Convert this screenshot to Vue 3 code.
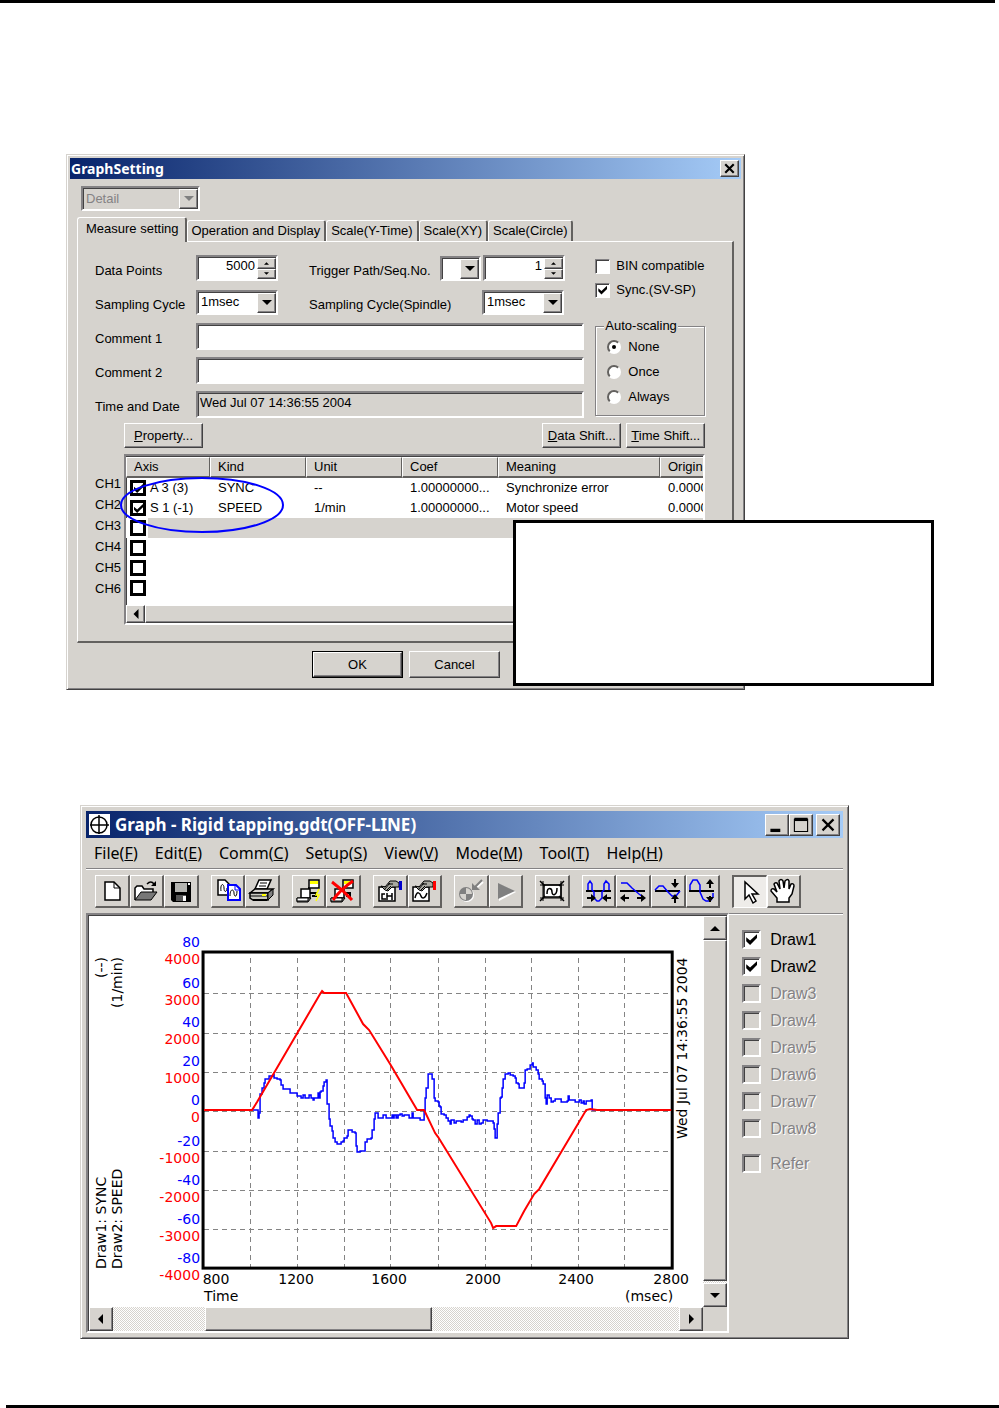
<script setup>
import { ref } from 'vue'

const tabs = ['Measure setting', 'Operation and Display', 'Scale(Y-Time)', 'Scale(XY)', 'Scale(Circle)']
const activeTab = ref(0)
const columns = ['Axis', 'Kind', 'Unit', 'Coef', 'Meaning', 'Origin']
const channels = ref([
  { on: true, cells: ['A 3 (3)', 'SYNC', '--', '1.00000000...', 'Synchronize error', '0.0000'] },
  { on: true, cells: ['S 1 (-1)', 'SPEED', '1/min', '1.00000000...', 'Motor speed', '0.0000'] },
  { on: false, selected: true, cells: ['', '', '', '', '', ''] },
  { on: false, cells: ['', '', '', '', '', ''] },
  { on: false, cells: ['', '', '', '', '', ''] },
  { on: false, cells: ['', '', '', '', '', ''] }
])
const dataPoints = ref(5000)
const seqNo = ref(1)
const bin = ref(false)
const sync = ref(true)
const scaling = ref('None')

const menus = [['File', 'F'], ['Edit', 'E'], ['Comm', 'C'], ['Setup', 'S'], ['View', 'V'], ['Mode', 'M'], ['Tool', 'T'], ['Help', 'H']]
const draws = ref([1, 2, 3, 4, 5, 6, 7, 8].map(n => ({ label: 'Draw' + n, on: n < 3, off: n > 2 })).concat({ label: 'Refer', on: false, off: true }))

// Toolbar icons on a 34 x 34 grid: d = path, f = fill, s = stroke, w = stroke width
const K = '#000'
const W = '#fff'
const B = '#00f'
const G = '#808080'
const laptops = [
  { d: 'M17 12v6h7v3h-4', s: K, w: 2 },
  { d: 'M9 14h9v9H9z', f: W, s: K, w: 1.5 },
  { d: 'M5 23h14l-3 4H5z', f: G, s: K },
  { d: 'M5 23h11v3H5z', f: W, s: K },
  { d: 'M17 5h10v8H17z', f: W, s: K, w: 1.5 },
  { d: 'M18 6h8v3h-8z', f: '#ff0' }
]
const handCard = c => [
  { d: 'M6 12h16v14H6z', f: W, s: K, w: 1.5 },
  { d: 'M12 15l-4-4 4 1 5-6h6l3 2v4h-7l-4 4z', f: '#a8a8a0', s: K },
  { d: 'M11 15l6-7M14 15l4-4M15 9h5', s: K },
  { d: 'M26 6h3v9h-3z', f: c }
]
const groups = [
  [
    { name: 'New', shapes: [{ d: 'M10 7h9l6 6v12H10z', f: W, s: K, w: 1.5 }, { d: 'M19 7v6h6', s: K }] },
    { name: 'Open', shapes: [{ d: 'M6 25V13l2-2h5l2 3h9v4', f: W, s: K, w: 1.5 }, { d: 'M6 25l6-8h16l-6 8z', f: '#777', s: K }, { d: 'M18 9q4-4 7 0', s: K, w: 1.5 }, { d: 'M27 6v5h-5z', f: K }] },
    { name: 'Save', shapes: [{ d: 'M7 7h20v20H9l-2-2z', f: K }, { d: 'M11 8h12v9H11z', f: '#b4b4b0' }, { d: 'M24 8h2v2h-2z', f: W }, { d: 'M12 20h10v6H12z', f: '#555' }, { d: 'M19 21h3v5h-3z', f: W }] }
  ],
  [
    { name: 'Copy', shapes: [{ d: 'M7 5h7l4 4v11H7z', f: W, s: K, w: 1.5 }, { d: 'M10 16c-1-8 3-8 3-3s3 4 3 0', s: K }, { d: 'M17 10h8l4 4v11H17z', f: W, s: B, w: 2 }, { d: 'M24 10v5h5', s: B }, { d: 'M19 21c0-8 4-7 4-3s3 5 3-2', s: K }] },
    { name: 'Print', shapes: [{ d: 'M10 14l4-9h12l-4 9z', f: W, s: K, w: 1.5 }, { d: 'M15 8h7M14 11h7', s: K }, { d: 'M5 18l5-4h18l-5 4z', f: '#d6d3ce', s: K, w: 1.5 }, { d: 'M5 18h18v7H8l-3-2z', f: '#c8c8c0', s: K, w: 1.5 }, { d: 'M23 18l5-4v6l-5 5z', f: G, s: K }, { d: 'M5 21h18', s: K }, { d: 'M17 19h4v2h-4z', f: '#ff0' }, { d: 'M8 25h14', s: K, w: 2 }] }
  ],
  [
    { name: 'Connect', shapes: [...laptops, { d: 'M27 14l-3 6h3l-3 6', s: '#ff0', w: 1.5 }] },
    { name: 'Disconnect', shapes: [...laptops, { d: 'M6 7q11 8 20 18M27 6q-12 8-20 19', s: '#f00', w: 3 }] }
  ],
  [
    { name: 'Channel setting', shapes: [...handCard('#00c'), { d: 'M12 19H9v5h4M14 18v7M14 21h5M19 18v7', s: K, w: 1.5 }] },
    { name: 'Wave setting', shapes: [...handCard('#f00'), { d: 'M8 23c2-8 5-5 6-2s4 3 6-3', s: K, w: 1.5 }] }
  ],
  [
    { name: 'Measure', shapes: [{ d: 'M6 20a7 7 0 1 0 14 0a7 7 0 1 0-14 0', f: W }, { d: 'M5 19a7 7 0 1 0 14 0a7 7 0 1 0-14 0', f: G }, { d: 'M12 13v6h6a6 6 0 0 0-6-6M12 19v6a6 6 0 0 1-6-6z', f: '#d6d3ce' }, { d: 'M29 7l-8 7', s: W, w: 2 }, { d: 'M28 5l-8 8', s: G, w: 2 }, { d: 'M18 8v7h8l-3-3-2-1z', f: G }] },
    { name: 'Start', shapes: [{ d: 'M10 9v17l17-9z', f: W }, { d: 'M9 8v16l17-8z', f: G }] }
  ],
  [
    { name: 'Fit area', shapes: [{ d: 'M9 10h17v12H9z', f: W, s: K, w: 1.5 }, { d: 'M5 10h24M5 23h24M8 6v20M26 6v20', s: K }, { d: 'M5 6l5 5M29 6l-5 5M5 26l5-5M29 26l-5-5', s: K, w: 1.5 }, { d: 'M12 19c0-8 5-6 5-2s5 4 5-4', s: K, w: 1.5 }] }
  ],
  [
    { name: 'Shrink time', shapes: [{ d: 'M4 16h25', s: K, w: 2 }, { d: 'M6 15V9l2-3 2 3v6l2 2v6l3 3h2l3-3v-6l2-2V9l2-3 3 3v6', s: B, w: 1.5 }, { d: 'M5 23h7M29 23h-7', s: K, w: 2 }, { d: 'M9 19v8l5-4zM25 19v8l-5-4z', f: K }] },
    { name: 'Expand time', shapes: [{ d: 'M4 16h25', s: K, w: 2 }, { d: 'M5 8h6l5 5 7 6 4 3', s: B, w: 1.5 }, { d: 'M7 23h6M21 23h6', s: K, w: 2 }, { d: 'M9 19v8l-5-4zM25 19v8l5-4z', f: K }] },
    { name: 'Shrink scale', shapes: [{ d: 'M4 16h25', s: K, w: 2 }, { d: 'M4 15l4-4h4l5 6 4 4h4l4-5', s: B, w: 1.5 }, { d: 'M24 4v6M24 28v-6', s: K, w: 2 }, { d: 'M20 8h8l-4 5zM20 24h8l-4-5z', f: K }] },
    { name: 'Expand scale', shapes: [{ d: 'M4 16h25', s: K, w: 2 }, { d: 'M5 15v-5l3-5h4l3 5v7l3 7 3 2h4l3-4v-4', s: B, w: 1.5 }, { d: 'M25 6v7M25 27v-6', s: K, w: 2 }, { d: 'M21 9h8l-4-5zM21 22h8l-4 5z', f: K }] }
  ],
  [
    { name: 'Pointer', pressed: true, shapes: [{ d: 'M12 6v17l4-4 4 8 3-2-4-7h6z', f: W, s: K, w: 1.5 }] },
    { name: 'Hand', shapes: [{ d: 'M11 27v-4l-6-7q0-3 3-2l3 3-3-8q1-2 3-1l3 6-1-8q2-3 4 0l1 7 1-7q3-3 4 0v8l2-5q3-1 3 2l-2 8-3 4v4z', f: W, s: K, w: 1.5 }] }
  ]
]

// Plot geometry
const vLines = [250, 297, 344, 390, 438, 485, 531, 578, 624]
const hLines = [992, 1032, 1071, 1110, 1150, 1189, 1228]
const yLabels = [[80, 4000, 941], [60, 3000, 982], [40, 2000, 1021], [20, 1000, 1060], [0, 0, 1099], [-20, -1000, 1140], [-40, -2000, 1179], [-60, -3000, 1218], [-80, -4000, 1257]]
const xLabels = [[800, 216], [1200, 296], [1600, 389], [2000, 483], [2400, 576], [2800, 671]]

const syncA = '515,598 533,598 533,620 538,620 538,605 541,550 546,530 551,515 555,503 563,503 566,494 581,488 583,500 592,504 600,508 604,522 610,535 626,535 630,545 645,545 650,555 660,555 662,562 668,562 670,552 676,562 682,562 688,552 693,562 698,567 702,560 710,560 714,545 718,562 720,543 724,540 728,525 733,512 739,508 741,580 746,582 746,625 750,628 751,645 756,660 760,680 766,692 770,698 781,698 784,692 790,690 793,680 802,674 804,657 812,657 815,664 825,667 827,705 831,712 831,724 838,724 840,720 853,720 855,693 862,685 872,682 876,657 881,655 882,625 885,607 892,607 894,620 906,620 908,612 914,612 917,622 936,622 940,613 947,613 949,620 953,612 960,612'
const syncB = '5,620 10,620 12,612 18,618 24,612 30,608 36,616 42,612 52,612 56,622 62,622 65,607 68,620 80,622 90,626 100,626 101,600 105,562 109,560 109,530 113,490 123,490 125,503 129,505 131,560 136,570 143,572 146,585 150,587 152,608 162,612 168,622 173,630 179,638 183,628 188,628 193,637 199,630 210,630 214,634 219,626 227,626 230,618 236,612 241,614 245,624 250,627 256,638 262,628 268,638 274,637 279,627 290,630 304,630 309,637 311,655 315,657 316,680 320,680 321,640 325,635 325,607 329,605 330,562 334,558 335,530 339,505 345,500 346,490 353,487 360,492 370,494 376,502 379,515 385,520 388,530 400,530 403,517 405,478 412,473 420,463 425,455 429,468 438,478 443,490 446,505 456,510 459,520 464,524 466,560 468,580 472,580 472,553 476,560 482,572 490,570 496,564 512,564 514,572 530,570 533,555 536,568 552,567 556,573 566,568 572,575 578,569 582,580 588,571 603,568 605,598 618,598'
const read = (s, ox) => s.split(' ').map(p => p.split(',')).map(([x, y]) => [Math.round(ox + x / 3), Math.round(910 + y / 3)])
const syncPath = [...read(syncA, 80), ...read(syncB, 390)].map(([x, y], i) => (i ? `H${x}V${y}` : `M${x} ${y}`)).join('')

const speedKnots = [[204, 1109], [252, 1109], [257, 1101], [320, 993], [322, 990], [324, 992], [346, 992], [363, 1023], [369, 1029], [390, 1063], [417, 1109], [424, 1109], [435, 1132], [438, 1136], [491, 1222], [493, 1227], [496, 1225], [516, 1225], [524, 1210], [534, 1193], [539, 1188], [586, 1109], [590, 1108], [597, 1109], [671, 1109]]
const speedPath = speedKnots.map(([x, y], i) => `${i ? 'L' : 'M'}${x} ${y}`).join('')
</script>

<template>
  <main class="page">
    <hr class="rule top" />

    <section class="dialog window" aria-label="GraphSetting">
      <header class="titlebar small">
        <h2>GraphSetting</h2>
        <button class="cap" type="button" aria-label="Close"><svg viewBox="0 0 16 14"><path d="M4 3l8 8M12 3l-8 8" stroke="#000" stroke-width="2" /></svg></button>
      </header>

      <div class="dialog-body">
        <span class="combo detail disabled">
          <select aria-label="Detail level" disabled><option>Detail</option></select>
          <i class="drop"><svg viewBox="0 0 10 6"><path d="M0 0h10L5 5z" fill="#808080" /></svg></i>
        </span>

        <div class="tabs" role="tablist">
          <button v-for="(t, i) in tabs" :key="t" type="button" role="tab" class="tab" :class="{ active: i === activeTab }" :aria-selected="i === activeTab" @click="activeTab = i">{{ t }}</button>
        </div>

        <div class="panel">
          <div class="fields">
            <div class="form">
              <label for="points">Data Points</label>
              <div class="line">
                <span class="spin"><input id="points" v-model="dataPoints" type="text" /><span class="arrows"><button type="button" aria-label="More points" @click="dataPoints++"><svg viewBox="0 0 6 3"><path d="M0 3h6L3 0z" /></svg></button><button type="button" aria-label="Fewer points" @click="dataPoints--"><svg viewBox="0 0 6 3"><path d="M0 0h6L3 3z" /></svg></button></span></span>
                <label class="second" for="path">Trigger Path/Seq.No.</label>
                <span class="combo tiny"><select id="path"><option></option></select><i class="drop"><svg viewBox="0 0 10 6"><path d="M0 0h10L5 5z" /></svg></i></span>
                <span class="spin"><input v-model="seqNo" type="text" aria-label="Sequence number" /><span class="arrows"><button type="button" aria-label="Next" @click="seqNo++"><svg viewBox="0 0 6 3"><path d="M0 3h6L3 0z" /></svg></button><button type="button" aria-label="Previous" @click="seqNo--"><svg viewBox="0 0 6 3"><path d="M0 0h6L3 3z" /></svg></button></span></span>
              </div>
              <label for="cycle">Sampling Cycle</label>
              <div class="line">
                <span class="combo"><select id="cycle"><option>1msec</option></select><i class="drop"><svg viewBox="0 0 10 6"><path d="M0 0h10L5 5z" /></svg></i></span>
                <label class="second wide" for="spindle">Sampling Cycle(Spindle)</label>
                <span class="combo"><select id="spindle"><option>1msec</option></select><i class="drop"><svg viewBox="0 0 10 6"><path d="M0 0h10L5 5z" /></svg></i></span>
              </div>
              <label for="c1">Comment 1</label>
              <input id="c1" class="text" type="text" />
              <label for="c2">Comment 2</label>
              <input id="c2" class="text" type="text" />
              <label for="date">Time and Date</label>
              <input id="date" class="text readonly" type="text" value="Wed Jul 07 14:36:55 2004" readonly />
            </div>

            <div class="options">
              <label class="check"><input v-model="bin" type="checkbox" />BIN compatible</label>
              <label class="check"><input v-model="sync" type="checkbox" />Sync.(SV-SP)</label>
              <fieldset>
                <legend>Auto-scaling</legend>
                <label v-for="o in ['None', 'Once', 'Always']" :key="o" class="radio"><input v-model="scaling" type="radio" name="scaling" :value="o" />{{ o }}</label>
              </fieldset>
            </div>
          </div>

          <div class="actions">
            <button type="button" class="btn"><span><u>P</u>roperty...</span></button>
            <button type="button" class="btn push"><span><u>D</u>ata Shift...</span></button>
            <button type="button" class="btn"><span><u>T</u>ime Shift...</span></button>
          </div>

          <div class="channels">
            <ul>
              <li v-for="n in 6" :key="n">CH{{ n }}</li>
            </ul>
            <div class="list">
              <table>
                <colgroup><col v-for="c in columns" :key="c" :class="c.toLowerCase()" /></colgroup>
                <thead>
                  <tr><th v-for="c in columns" :key="c" scope="col">{{ c }}</th></tr>
                </thead>
                <tbody>
                  <tr v-for="(row, r) in channels" :key="r" :class="{ selected: row.selected }">
                    <td v-for="(cell, i) in row.cells" :key="i">
                      <label v-if="i === 0"><input v-model="row.on" type="checkbox" :aria-label="'Enable CH' + (r + 1)" />{{ cell }}</label>
                      <template v-else>{{ cell }}</template>
                    </td>
                  </tr>
                </tbody>
              </table>
              <div class="hbar thin">
                <button type="button" class="arrow" aria-label="Scroll left"><svg viewBox="0 0 8 8"><path d="M6 0v8L2 4z" /></svg></button>
                <div class="thumb"></div>
              </div>
            </div>
            <svg class="mark" viewBox="0 0 164 56" aria-hidden="true"><ellipse cx="82" cy="28" rx="81" ry="27" fill="none" stroke="#00f" stroke-width="2" /></svg>
          </div>
        </div>

        <div class="footer">
          <button type="button" class="btn big default">OK</button>
          <button type="button" class="btn big">Cancel</button>
        </div>
      </div>

      <div class="callout"></div>
    </section>

    <section class="graph window" aria-label="Graph">
      <header class="titlebar">
        <svg class="logo" viewBox="0 0 21 21"><path d="M0 0h21v21H0z" fill="#fff" /><path d="M10 1v19M1 11h19" stroke="#000" stroke-width="1.5" /><circle cx="10" cy="11" r="8" fill="none" stroke="#000" stroke-width="1.5" /></svg>
        <h2>Graph - Rigid tapping.gdt(OFF-LINE)</h2>
        <button class="cap" type="button" aria-label="Minimize"><svg viewBox="0 0 20 18"><path d="M4 14h9" stroke="#000" stroke-width="3" /></svg></button>
        <button class="cap" type="button" aria-label="Maximize"><svg viewBox="0 0 20 18"><path d="M4 4h12v11H4z" fill="none" stroke="#000" /><path d="M4 4h12" stroke="#000" stroke-width="3" /></svg></button>
        <button class="cap last" type="button" aria-label="Close window"><svg viewBox="0 0 20 18"><path d="M5 4l10 10M15 4L5 14" stroke="#000" stroke-width="2" /></svg></button>
      </header>
      <nav class="menu">
        <button v-for="m in menus" :key="m[0]" type="button">{{ m[0] }}(<u>{{ m[1] }}</u>)</button>
      </nav>
      <div class="toolbar">
        <div v-for="(g, gi) in groups" :key="gi" class="group" :class="'n' + g.length">
          <button v-for="b in g" :key="b.name" type="button" :aria-label="b.name" :class="{ pressed: b.pressed }">
            <svg viewBox="0 0 34 34"><path v-for="(s, si) in b.shapes" :key="si" :d="s.d" :fill="s.f || 'none'" :stroke="s.s || 'none'" :stroke-width="s.w || 1" /></svg>
          </button>
        </div>
      </div>

      <div class="work">
        <div class="pane">
          <svg class="plot" viewBox="89 915 614 391" role="img" aria-label="SYNC and SPEED over time">
            <g stroke="#848484" stroke-width="1" stroke-dasharray="5 4" shape-rendering="crispEdges">
              <line v-for="x in vLines" :key="'v' + x" :x1="x" :x2="x" y1="957" y2="1266" />
              <line v-for="y in hLines" :key="'h' + y" :y1="y" :y2="y" x1="204" x2="671" />
            </g>
            <rect x="203" y="951" width="469" height="316" fill="none" stroke="#000" stroke-width="3" />
            <path :d="syncPath" fill="none" stroke="#00f" stroke-width="1.5" />
            <path :d="speedPath" fill="none" stroke="#f00" stroke-width="2" />
            <g text-anchor="end">
              <g v-for="l in yLabels" :key="l[2]">
                <text x="200" :y="l[2] + 5" fill="#00f">{{ l[0] }}</text>
                <text x="200" :y="l[2] + 22" fill="#f00">{{ l[1] }}</text>
              </g>
            </g>
            <text v-for="l in xLabels" :key="l[0]" :x="l[1]" y="1283" text-anchor="middle">{{ l[0] }}</text>
            <text x="204" y="1300">Time</text>
            <text x="673" y="1300" text-anchor="end">(msec)</text>
            <text transform="translate(106 1268) rotate(-90)">Draw1: SYNC</text>
            <text transform="translate(122 1268) rotate(-90)">Draw2: SPEED</text>
            <text transform="translate(106 956) rotate(-90)" text-anchor="end">(--)</text>
            <text transform="translate(122 956) rotate(-90)" text-anchor="end">(1/min)</text>
            <text transform="translate(687 1138) rotate(-90)">Wed Jul 07 14:36:55 2004</text>
          </svg>
          <div class="vbar">
            <button type="button" class="arrow" aria-label="Scroll up"><svg viewBox="0 0 10 10"><path d="M0 8h10L5 3z" /></svg></button>
            <div class="thumb"></div>
            <button type="button" class="arrow" aria-label="Scroll down"><svg viewBox="0 0 10 10"><path d="M0 3h10L5 8z" /></svg></button>
          </div>
          <div class="hbar">
            <button type="button" class="arrow" aria-label="Scroll left"><svg viewBox="0 0 10 10"><path d="M7 0v10L2 5z" /></svg></button>
            <div class="thumb"></div>
            <button type="button" class="arrow" aria-label="Scroll right"><svg viewBox="0 0 10 10"><path d="M3 0v10l5-5z" /></svg></button>
          </div>
        </div>
        <aside>
          <label v-for="d in draws" :key="d.label" class="draw" :class="{ off: d.off }"><input v-model="d.on" type="checkbox" :disabled="d.off" />{{ d.label }}</label>
        </aside>
      </div>
    </section>

    <hr class="rule bottom" />
  </main>
</template>

<style>
body { background: #fff; }
</style>

<style scoped>
* { box-sizing: border-box; }
.page { display: flex; flex-direction: column; min-height: 100vh; color: #000; font: 13px/16px "Liberation Sans", Arial, sans-serif; }
.rule { border: 0; height: 3px; background: #000; margin: 0; }
.top { margin-right: 4px; }
.bottom { margin: auto 0 0 6px; }
button, input, select { font: inherit; color: inherit; margin: 0; }
button { padding: 0; }
svg { display: block; }

.window { position: relative; background: #d6d3ce; border: 1px solid; border-color: #d6d3ce #424142 #424142 #d6d3ce; box-shadow: inset 1px 1px #fff, inset -1px -1px #848284; padding: 3px; }
.dialog { margin: 151px 0 0 66px; width: 68%; min-width: 660px; }
.graph { margin: 115px 0 0 80px; width: 77%; min-width: 740px; padding: 5px; }

.titlebar { display: flex; align-items: center; height: 27px; padding: 0 3px; background: linear-gradient(90deg, #08246b, #a5cbf7); color: #fff; }
.titlebar.small { height: 21px; padding: 0 2px 0 1px; }
.titlebar h2 { flex: 1; margin: 0; font: bold 17px/20px "Noto Sans", "Open Sans", sans-serif; white-space: nowrap; }
.titlebar.small h2 { font-size: 14px; }
.logo { width: 21px; height: 21px; margin-right: 5px; }
.cap, .btn, .arrow, .drop, .thumb, .group button, .arrows button { background: #d6d3ce; border: 1px solid; border-color: #fff #424142 #424142 #fff; box-shadow: inset -1px -1px #848284; }
.cap { width: 24px; height: 22px; }
.small .cap { width: 19px; height: 17px; }
.cap svg { width: 100%; }
.cap.last { margin-left: 3px; }

.dialog-body { padding: 7px 7px 8px 7px; }
.combo, .spin, .text, .list, .pane { border: 2px solid; border-color: #848284 #fff #fff #848284; box-shadow: inset 1px 1px #424142; background: #fff; }
.combo { position: relative; display: flex; width: 82px; height: 25px; }
.combo select { appearance: none; width: 100%; border: 0; background: none; padding: 0 20px 0 3px; outline: 0; }
.drop { position: absolute; top: 1px; right: 0; bottom: 0; width: 19px; display: flex; align-items: center; justify-content: center; pointer-events: none; }
.drop svg { width: 10px; height: 6px; }
.detail { width: 119px; margin-left: 4px; }
.disabled { background: #d6d3ce; color: #848284; text-shadow: 1px 1px #fff; }
.disabled select { color: #848284; opacity: 1; }

.tabs { display: flex; align-items: flex-end; height: 30px; }
.tab { height: 21px; background: #d6d3ce; border: 1px solid; border-width: 1px 2px 0 1px; border-color: #fff #63615f #fff #fff; border-radius: 3px 3px 0 0; padding: 0 4px; white-space: nowrap; }
.tab.active { height: 25px; margin: 0 0 -1px; padding: 0 6px 2px 8px; position: relative; }
.panel { border: 1px solid; border-width: 1px 2px 2px 1px; border-color: #fff #63615f #63615f #fff; padding: 13px 27px 16px 17px; }
.fields { display: flex; gap: 11px; }
.form { flex: 1; display: grid; grid-template-columns: 101px 1fr; grid-auto-rows: 26px; row-gap: 8px; align-items: center; }
.form label { padding-top: 6px; }
.line { display: flex; align-items: center; }
.form .second { flex: 1; padding-left: 31px; white-space: nowrap; max-width: 162px; }
.form .wide { max-width: 204px; }
.tiny { width: 41px; margin-right: 2px; }
.spin { display: flex; width: 82px; height: 26px; }
.spin input { flex: 1; min-width: 0; width: 0; border: 0; background: none; text-align: right; padding: 0 2px 4px; outline: 0; }
.arrows { display: flex; flex-direction: column; width: 19px; padding-top: 1px; }
.arrows button { flex: 1; display: flex; align-items: center; justify-content: center; }
.arrows svg { width: 5px; height: 3px; }
.text { width: 100%; height: 27px; padding: 0 2px 3px; outline: 0; }
.readonly { background: #d6d3ce; }

.options { width: 110px; padding-top: 2px; }
.check { display: flex; align-items: center; gap: 6px; height: 24px; margin-bottom: 0; white-space: nowrap; }
.check:first-child { height: 18px; margin-bottom: 3px; }
input[type="checkbox"] { appearance: none; flex: none; width: 15px; height: 15px; background: #fff; border: 1px solid; border-color: #848284 #fff #fff #848284; box-shadow: inset 1px 1px #424142; }
input[type="checkbox"]:checked::before { content: ""; display: block; width: 9px; height: 9px; margin: 2px; background: #000; clip-path: polygon(0 30%, 35% 60%, 100% 0, 100% 35%, 35% 100%, 0 65%); }
fieldset { border: 1px solid #848284; box-shadow: 1px 1px #fff, inset 1px 1px #fff; margin: 16px 0 0; padding: 0 0 5px 11px; height: 98px; }
legend { background: #d6d3ce; padding: 0 1px; margin-left: -3px; }
.radio { display: flex; align-items: center; gap: 7px; height: 25px; }
input[type="radio"] { appearance: none; width: 14px; height: 14px; border-radius: 50%; border: 2px solid; border-color: #63615f #fff #fff #63615f; background: #fff; }
input[type="radio"]:checked::before { content: ""; display: block; width: 4px; height: 4px; margin: 3px; border-radius: 50%; background: #000; }

.actions { display: flex; gap: 5px; padding: 6px 0 6px 29px; }
.btn { width: 79px; height: 25px; white-space: nowrap; }
.push { margin-left: auto; }
.big { width: 91px; height: 27px; }
.default { outline: 1px solid #000; outline-offset: -1px; border: 2px solid; border-color: #fff #424142 #424142 #fff; }
.channels { position: relative; display: flex; }
.channels ul { list-style: none; width: 29px; margin: 0; padding: 19px 0 0; }
.channels li { height: 21px; line-height: 21px; }
.list { flex: 1; min-width: 0; height: 171px; display: flex; flex-direction: column; overflow: hidden; }
table { table-layout: fixed; border-collapse: separate; border-spacing: 0; width: 100%; margin: 1px 0 auto; }
.axis { width: 84px; }
.kind, .unit, .coef { width: 96px; }
.meaning { width: 162px; }
th { background: #d6d3ce; font-weight: normal; text-align: left; height: 21px; padding: 0 0 0 7px; border: 1px solid; border-color: #fff #63615f #63615f #fff; border-bottom-width: 2px; overflow: hidden; }
th:last-child { border-right: 0; }
td { height: 20px; padding: 0 0 0 8px; white-space: nowrap; overflow: hidden; }
td:first-child { padding-left: 4px; }
.selected td { background: #d6d3ce; }
.selected td:first-child { background: linear-gradient(90deg, #fff 22px, #d6d3ce 22px); }
td label { display: flex; align-items: center; gap: 4px; }
td input[type="checkbox"] { width: 16px; height: 16px; border: 3px solid #000; box-shadow: none; }
td input[type="checkbox"]:checked::before { margin: 1px; }
.mark { position: absolute; left: 25px; top: 23px; width: 164px; height: 56px; pointer-events: none; }
.footer { display: flex; gap: 6px; padding: 8px 0 0 235px; }
.callout { position: absolute; top: 365px; right: -190px; width: 421px; height: 166px; background: #fff; border: 3px solid #000; }

.hbar, .vbar { display: flex; background: repeating-conic-gradient(#fff 0 25%, #d6d3ce 0 50%) 0 0 / 2px 2px; }
.arrow { flex: none; width: 24px; height: 24px; display: flex; align-items: center; justify-content: center; }
.arrow svg { width: 10px; height: 10px; }
.hbar .thumb { margin: 0 auto 0 15%; width: 37%; }
.thin .arrow { width: 19px; height: 18px; }
.thin .thumb { flex: 1; margin: 0; }

.menu { display: flex; gap: 17px; height: 31px; padding-left: 8px; border-bottom: 1px solid #848284; box-shadow: 0 1px #fff; }
.menu button { border: 0; background: none; font: 16px/20px "Noto Sans", "Open Sans", sans-serif; white-space: nowrap; }
.toolbar { display: flex; gap: 12px; padding: 6px 42px 5px 9px; }
.group { display: flex; flex: 1 1 0; min-width: 0; }
.n2 { flex-grow: 2; }
.n3 { flex-grow: 3; }
.n4 { flex-grow: 4; }
.group button { flex: 1; height: 33px; min-width: 0; display: flex; justify-content: center; border-width: 1px 2px 2px 1px; border-color: #fff #63615f #63615f #fff; box-shadow: none; }
.group svg { width: 34px; height: 34px; margin: -1px; flex: none; }
.group .pressed { border-width: 2px 1px 1px 2px; border-color: #63615f #fff #fff #63615f; background: #eeece9; }

.work { display: flex; }
.pane { flex: 1; min-width: 0; display: grid; grid-template-columns: 1fr 24px; grid-template-rows: auto 24px; padding: 1px 0 0 1px; }
.plot { width: 100%; font: 14px "DejaVu Sans", sans-serif; background: #fff; }
.vbar { flex-direction: column; }
.vbar .thumb { flex: 1; margin-bottom: 2px; }
.pane::after { content: ""; background: #d6d3ce; }
aside { width: 114px; border-top: 1px solid #848284; box-shadow: inset 0 1px #fff; padding: 12px 0 0 13px; }
.draw { display: flex; align-items: center; gap: 9px; height: 27px; font-size: 16px; }
.draw:last-child { margin-top: 8px; }
.draw input[type="checkbox"] { width: 19px; height: 19px; border-width: 2px; }
.draw input[type="checkbox"]:checked::before { width: 11px; height: 11px; }
.off { color: #848284; text-shadow: 1px 1px #fff; }
.off input[type="checkbox"] { background: #d6d3ce; }
</style>
